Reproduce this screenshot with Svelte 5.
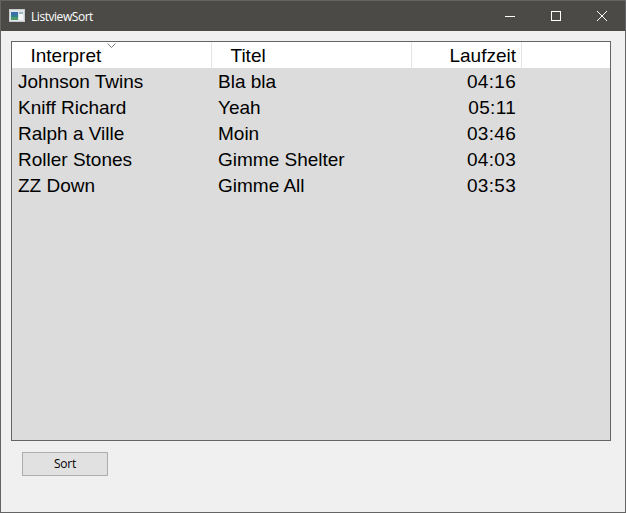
<script>
  const rows = [
    ["Johnson Twins", "Bla bla", "04:16"],
    ["Kniff Richard", "Yeah", "05:11"],
    ["Ralph a Ville", "Moin", "03:46"],
    ["Roller Stones", "Gimme Shelter", "04:03"],
    ["ZZ Down", "Gimme All", "03:53"]
  ];
</script>

<div class="window">
  <header class="titlebar">
    <svg class="appicon" width="16" height="14" viewBox="0 0 16 14">
      <rect x="0.5" y="0.5" width="15" height="12" fill="#dfe4e6" stroke="#c9cccc"/>
      <rect x="2" y="3" width="7" height="8" fill="#2f7f8c"/>
      <rect x="2" y="3" width="7" height="3" fill="#3d6fae"/>
      <rect x="2" y="8" width="7" height="3" fill="#4f9a6a"/>
      <rect x="10" y="3" width="4" height="8" fill="#f4f6f6"/>
      <rect x="10" y="3" width="4" height="2" fill="#9fb6c4"/>
    </svg>
    <span class="title">ListviewSort</span>
    <div class="controls">
      <button class="ctl" aria-label="Minimize">
        <svg width="12" height="12" viewBox="0 0 12 12"><path d="M1 6.5h10" stroke="#fff" stroke-width="1"/></svg>
      </button>
      <button class="ctl" aria-label="Maximize">
        <svg width="12" height="12" viewBox="0 0 12 12"><rect x="1.5" y="1.5" width="9" height="9" fill="none" stroke="#fff"/></svg>
      </button>
      <button class="ctl" aria-label="Close">
        <svg width="12" height="12" viewBox="0 0 12 12"><path d="M1 1l10 10M11 1L1 11" stroke="#fff" stroke-width="1"/></svg>
      </button>
    </div>
  </header>

  <main class="content">
    <section class="list">
      <div class="head">
        <div class="hcell first">Interpret
          <svg class="sort" width="9" height="5" viewBox="0 0 9 5"><path d="M0.5 0.5L4.5 4.5L8.5 0.5" fill="none" stroke="#7d7d7d"/></svg>
        </div>
        <div class="hcell second">Titel</div>
        <div class="hcell third">Laufzeit</div>
        <div class="hcell last"></div>
      </div>
      {#each rows as r}
        <div class="row">
          <div class="cell">{r[0]}</div>
          <div class="cell">{r[1]}</div>
          <div class="cell num">{r[2]}</div>
        </div>
      {/each}
    </section>
    <button class="sortbtn">Sort</button>
  </main>
</div>

<style>
  :global(body) {
    margin: 0;
    background: #f0f0f0;
  }
  .window {
    box-sizing: border-box;
    width: 626px;
    height: 513px;
    border: 1px solid #646464;
    background: #f0f0f0;
    display: flex;
    flex-direction: column;
    overflow: hidden;
  }
  .titlebar {
    height: 30px;
    flex: none;
    background: #4b4a47;
    display: flex;
    align-items: center;
    padding-left: 8px;
  }
  .appicon {
    flex: none;
    margin-right: 6px;
  }
  .title {
    color: #fff;
    font: 12px "Open Sans", sans-serif;
    letter-spacing: -0.45px;
  }
  .controls {
    margin-left: auto;
    display: flex;
  }
  .ctl {
    width: 46px;
    height: 30px;
    padding: 0;
    border: 0;
    background: none;
    display: flex;
    align-items: center;
    justify-content: center;
  }
  .content {
    flex: 1;
    display: flex;
    flex-direction: column;
    padding: 10px 14px 0 10px;
  }
  .list {
    box-sizing: border-box;
    height: 400px;
    border: 1px solid #646464;
    background: #dcdcdc;
    font: 19px "Liberation Sans", Arial, sans-serif;
    color: #000;
  }
  .head {
    height: 26px;
    background: #fff;
    display: grid;
    grid-template-columns: 200px 200px 110px 1fr;
  }
  .hcell {
    position: relative;
    box-sizing: border-box;
    line-height: 27px;
    border-right: 1px solid #e5e5e5;
  }
  .first, .second {
    padding-left: 18.5px;
  }
  .third {
    text-align: right;
    padding-right: 5px;
  }
  .last {
    border-right: 0;
  }
  .sort {
    position: absolute;
    left: 95px;
    top: 1px;
  }
  .row {
    height: 26px;
    display: grid;
    grid-template-columns: 200px 200px 110px;
    line-height: 28px;
  }
  .cell {
    padding-left: 6px;
  }
  .num {
    padding: 0 6px 0 0;
    text-align: right;
    letter-spacing: 0.3px;
  }
  .sortbtn {
    box-sizing: border-box;
    width: 86px;
    height: 24px;
    margin: 11px 0 0 11px;
    padding: 0 0 2px;
    border: 1px solid #adadad;
    background: #e1e1e1;
    color: #000;
    font: 12px "Open Sans", sans-serif;
    letter-spacing: -0.2px;
  }
</style>
